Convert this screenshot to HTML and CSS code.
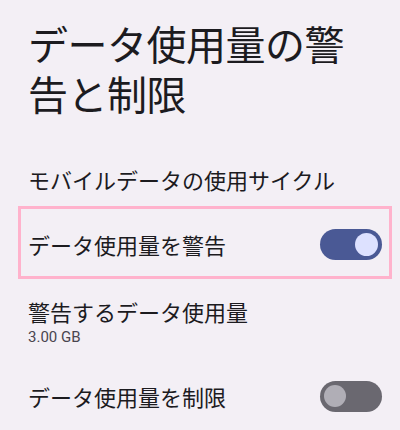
FILE: index.html
```html
<!DOCTYPE html>
<html lang="ja">

<head>
    <meta charset="UTF-8">
    <meta name="viewport" content="width=device-width, initial-scale=1.0">
    <title>データ使用量の警告と制限</title>
    <link rel="stylesheet" href="styles.css">
</head>

<body>
    <!-- 見出し -->
    <h1 class="pageTitle">データ使用量の警告と制限</h1>

    <!-- 設定リスト -->
    <div class="prefList">
        <div class="prefItem cycleItem">
            <div class="prefTitle">モバイルデータの使用サイクル</div>
        </div>

        <!-- ピンクの枠で囲まれた行 -->
        <div class="prefItem switchItem markedItem">
            <div class="prefTitle">データ使用量を警告</div>
            <div class="switchNode on"><span class="thumb"></span></div>
        </div>

        <div class="prefItem warnItem">
            <div class="prefText">
                <div class="prefTitle">警告するデータ使用量</div>
                <div class="prefSummary">3.00 GB</div>
            </div>
        </div>

        <div class="prefItem switchItem limitItem">
            <div class="prefTitle">データ使用量を制限</div>
            <div class="switchNode"><span class="thumb"></span></div>
        </div>
    </div>
</body>

</html>
```

FILE: styles.css
```css
* {
    margin: 0;
    padding: 0;
    box-sizing: border-box;
}

body {
    width: 400px;
    height: 430px;
    overflow: hidden;
    background: #f3eff5;
    color: #1c1b1f;
    font-family: "Noto Sans CJK JP", "Noto Sans", sans-serif;
}

.pageTitle {
    padding: 18px 20px 0 28px;
    font-size: 40px;
    line-height: 50px;
    font-weight: 400;
    letter-spacing: -0.5px;
}

.prefList {
    margin-top: 33px;
}

.prefItem {
    display: flex;
    align-items: center;
    justify-content: space-between;
    padding: 0 18px 0 28px;
}

.prefTitle {
    font-size: 22px;
    line-height: 30px;
}

.cycleItem {
    height: 55px;
}

.switchItem {
    height: 72px;
}

.markedItem {
    height: 73px;
    margin: 0 8px 0 18px;
    padding: 3px 7px 0;
    border: 3px solid #ffb2cc;
}

.warnItem {
    padding-top: 17px;
    height: 86px;
    align-items: flex-start;
}

.prefSummary {
    font-family: Roboto, "Noto Sans CJK JP", sans-serif;
    font-size: 15px;
    line-height: 20px;
    color: #49454f;
    margin-top: 1px;
}

.limitItem {
    height: 62px;
}

/* スイッチ */
.switchNode {
    width: 62px;
    height: 31px;
    border-radius: 16px;
    background: #6a6870;
    display: flex;
    align-items: center;
    padding: 0 4px;
}

.switchNode .thumb {
    width: 22px;
    height: 22px;
    border-radius: 50%;
    background: #b0aeb6;
}

.switchNode.on {
    background: #4a5995;
    justify-content: flex-end;
}

.switchNode.on .thumb {
    width: 23px;
    height: 23px;
    background: #dde1ff;
}
```
